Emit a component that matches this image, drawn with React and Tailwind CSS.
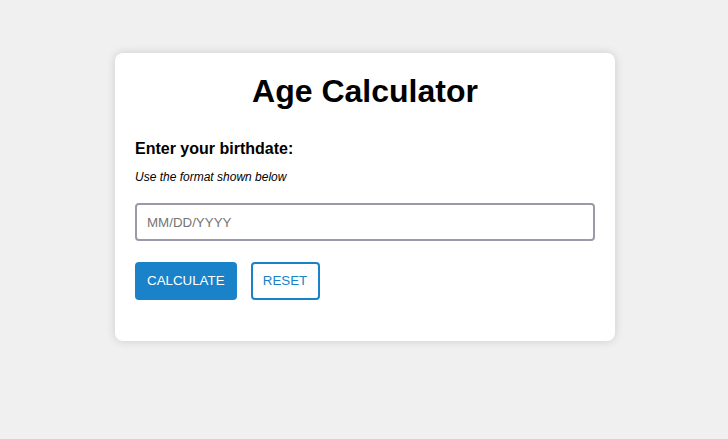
export default function App() {
  return (
    <div className="min-h-[439px] bg-[#f0f0f0] pt-[53px] font-['Liberation_Sans',Arial,sans-serif]">
      <div className="ml-[115px] w-[500px] rounded-lg bg-white px-5 pt-5 pb-[41px] shadow-[0_0_10px_rgba(0,0,0,0.15)]">
        <h1 className="text-center text-[32px] font-bold leading-[37px] text-black">Age Calculator</h1>
        <label className="mt-[30px] block text-base font-bold leading-[18px] text-black">Enter your birthdate:</label>
        <p className="mt-[12px] text-xs italic leading-[14px] text-black">Use the format shown below</p>
        <input
          type="text"
          placeholder="MM/DD/YYYY"
          className="mt-[19px] block h-[38px] w-full rounded border-2 border-[#9a9aab] px-[10px] text-[13.33px] text-black placeholder:text-[#757575] outline-none"
        />
        <div className="mt-[21px] flex gap-[14px]">
          <button className="h-[38px] rounded bg-[#1a82c8] px-3 text-[13.33px] text-white">CALCULATE</button>
          <button className="h-[38px] w-[69px] rounded border-2 border-[#1a82c8] bg-white text-[13.33px] text-[#1a82c8]">RESET</button>
        </div>
      </div>
    </div>
  )
}
